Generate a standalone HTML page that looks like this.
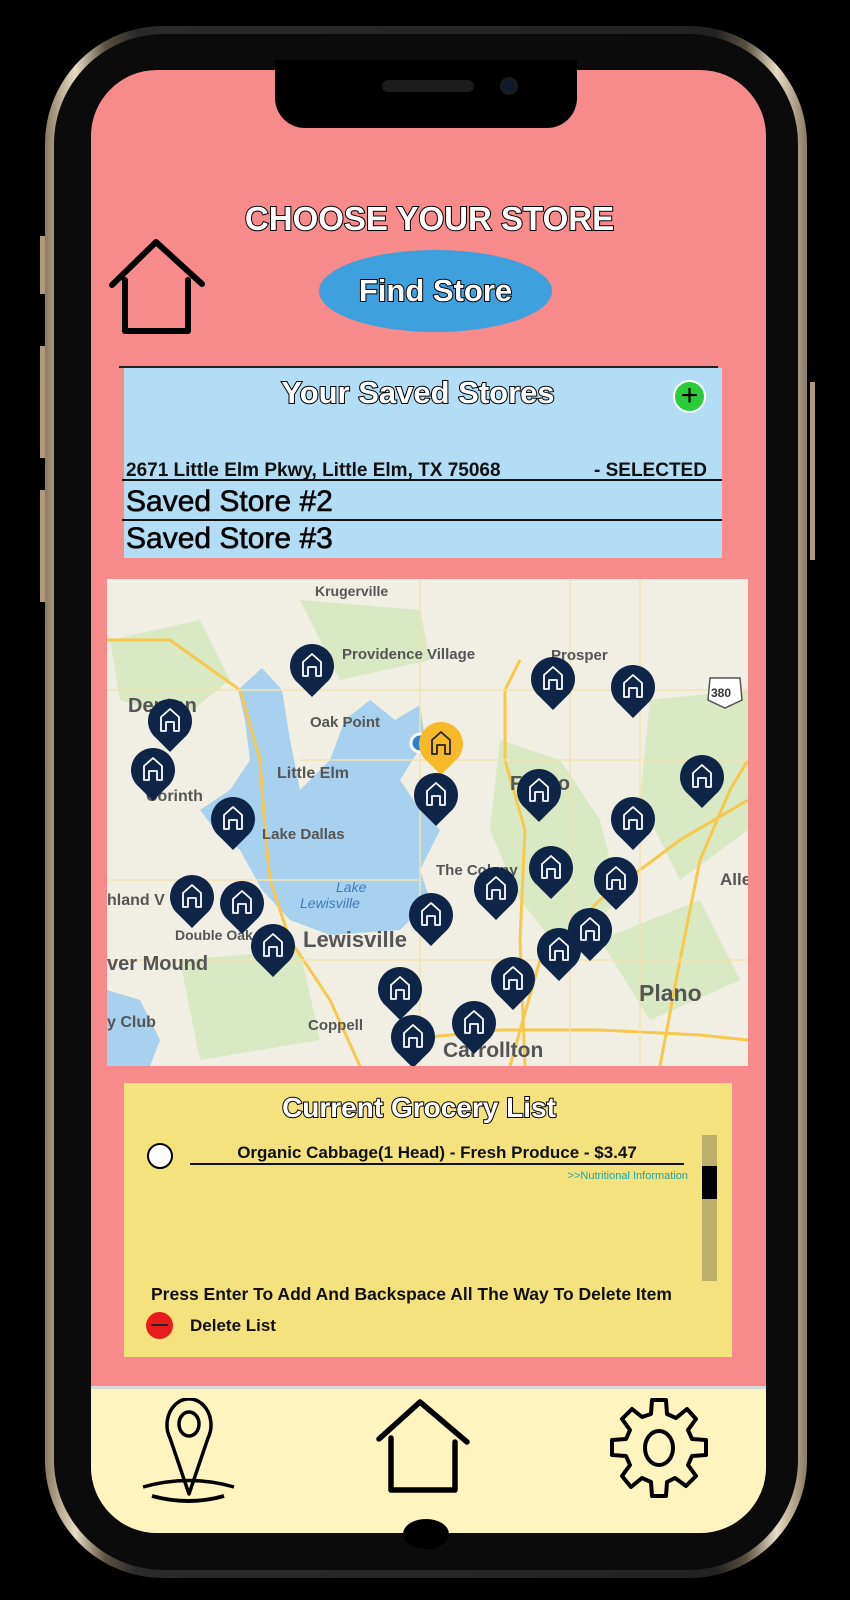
<!DOCTYPE html>
<html><head><meta charset="utf-8"><style>
*{margin:0;padding:0;box-sizing:border-box}
body{width:850px;height:1600px;background:#000;position:relative;overflow:hidden;font-family:"Liberation Sans",sans-serif}
.abs{position:absolute}
.bezel{left:45px;top:26px;width:762px;height:1552px;border-radius:118px;background:linear-gradient(90deg,#8a7a62,#e8dcc6 4%,#5a5040 8%,#2a2a2a 12%,#222 88%,#5a5040 92%,#e8dcc6 96%,#8a7a62)}
.inner{left:54px;top:34px;width:744px;height:1536px;border-radius:110px;background:#0b0b0b}
.screen{left:91px;top:70px;width:675px;height:1463px;border-radius:66px;background:#f78b8b;overflow:hidden}
.notch{left:275px;top:60px;width:302px;height:68px;background:#000;border-radius:0 0 30px 30px}
.out{color:#fff;font-weight:bold;-webkit-text-stroke:2px #000;paint-order:stroke fill;text-align:center;white-space:nowrap}
.q{font-family:"Liberation Sans",sans-serif}
</style></head><body>
<div class="abs bezel"></div>
<div class="abs inner"></div>
<div class="abs screen"></div>
<div class="abs notch"></div>
<div class="abs" style="left:382px;top:80px;width:92px;height:12px;border-radius:6px;background:#1c1c1c"></div>
<div class="abs" style="left:500px;top:77px;width:18px;height:18px;border-radius:50%;background:#0d1a2e;border:3px solid #1c1c1c"></div>
<div class="abs" style="left:40px;top:236px;width:5px;height:58px;background:#b09a78"></div>
<div class="abs" style="left:40px;top:346px;width:5px;height:112px;background:#b09a78"></div>
<div class="abs" style="left:40px;top:490px;width:5px;height:112px;background:#b09a78"></div>
<div class="abs" style="left:810px;top:382px;width:5px;height:178px;background:#b09a78"></div>

<div class="abs out q" style="left:92px;width:675px;top:200px;font-size:33px">CHOOSE YOUR STORE</div>
<svg class="abs" style="left:108px;top:236px" width="102" height="102" viewBox="0 0 102 102"><path d="M4 49 L48 6 L94 48 M17 44 L17 95 L80 95 L80 44" fill="none" stroke="#000" stroke-width="6" stroke-linecap="round" stroke-linejoin="round"/></svg>
<div class="abs" style="left:319px;top:250px;width:233px;height:82px;border-radius:50%;background:#3ea0dc"></div>
<div class="abs out q" style="left:319px;width:233px;top:273px;font-size:31px">Find Store</div>

<div class="abs" style="left:119px;top:366px;width:599px;height:2px;background:#222"></div>
<div class="abs" style="left:124px;top:368px;width:598px;height:190px;background:#b3dcf5"></div>
<div class="abs out q" style="left:124px;width:598px;top:375px;font-size:31px;padding-right:10px">Your Saved Stores</div>
<div class="abs" style="left:673px;top:380px;width:33px;height:33px;border-radius:50%;background:#2ccb3a;border:2px solid #fff;color:#000;font-size:30px;line-height:27px;text-align:center">+</div>
<div class="abs q" style="left:126px;top:460px;font-size:19px;font-weight:bold;color:#111;white-space:nowrap">2671 Little Elm Pkwy, Little Elm, TX 75068</div>
<div class="abs q" style="left:594px;top:460px;font-size:19px;font-weight:bold;color:#111;white-space:nowrap">- SELECTED</div>
<div class="abs" style="left:122px;top:479px;width:600px;height:2px;background:#111"></div>
<div class="abs q" style="left:126px;top:485px;font-size:30px;color:#000;-webkit-text-stroke:0.6px #000">Saved Store #2</div>
<div class="abs" style="left:122px;top:519px;width:600px;height:2px;background:#111"></div>
<div class="abs q" style="left:126px;top:522px;font-size:30px;color:#000;-webkit-text-stroke:0.6px #000">Saved Store #3</div>

<svg class="abs" style="left:107px;top:579px" width="641" height="487" viewBox="107 579 641 487">
<defs>
<g id="pin"><path d="M0 32 L-14 18 A22 22 0 1 1 14 18 Z" fill="#0f2547"/><path d="M-9 11 L-9 -3 L0 -11 L9 -3 L9 11 L4 11 L4 2 L-4 2 L-4 11 Z" fill="none" stroke="#fff" stroke-width="1.8" stroke-linejoin="round"/></g>
<g id="piny"><path d="M0 32 L-14 18 A22 22 0 1 1 14 18 Z" fill="#f6b928"/><path d="M-9 11 L-9 -3 L0 -11 L9 -3 L9 11 L4 11 L4 2 L-4 2 L-4 11 Z" fill="none" stroke="#222" stroke-width="1.8" stroke-linejoin="round"/></g>
</defs>
<rect x="107" y="579" width="641" height="487" fill="#f1eee4"/>
<g fill="#d8e9c4">
<path d="M500 740 L560 760 L600 820 L620 900 L560 950 L520 900 L490 830 Z"/>
<path d="M650 700 L748 690 L748 830 L680 880 L640 800 Z"/>
<path d="M110 640 L200 620 L230 680 L180 720 L120 700 Z"/>
<path d="M300 600 L420 610 L430 660 L340 680 Z"/>
<path d="M600 940 L700 900 L740 980 L650 1020 Z"/>
<path d="M180 960 L300 950 L320 1040 L200 1060 Z"/>
</g>
<g fill="#a7d1ee">
<path d="M238 690 L262 668 L282 690 L290 740 L300 790 L330 760 L345 720 L370 700 L395 720 L420 705 L425 740 L400 780 L420 810 L440 830 L420 870 L430 900 L400 930 L330 935 L290 920 L262 890 L240 850 L215 830 L200 810 L230 790 L250 760 L245 720 Z"/>
<path d="M107 990 L140 1000 L160 1040 L150 1066 L107 1066 Z"/>
</g>
<g fill="none" stroke="#f6c94c" stroke-width="3">
<path d="M107 640 L170 640 L240 690 L260 760 L265 830 L270 880 L290 940 L330 1000 L360 1066"/>
<path d="M510 1066 L540 960 L600 900 L680 840 L748 800"/>
<path d="M525 1066 L520 940 L525 830 L505 760 L505 690 L520 660"/>
<path d="M660 1066 L680 960 L700 860 L730 790 L748 760"/>
<path d="M400 1040 L500 1030 L600 1030 L700 1035 L748 1040"/>
</g>
<g fill="none" stroke="#f4e2b0" stroke-width="1.5">
<path d="M107 690 L748 690"/><path d="M300 760 L748 760"/><path d="M420 579 L420 1066"/><path d="M570 579 L570 1066"/><path d="M640 579 L640 1066"/><path d="M107 880 L420 880"/><path d="M107 960 L748 960"/>
</g>
<g font-family="Liberation Sans,sans-serif" fill="#555" font-weight="bold">
<text x="315" y="596" font-size="14">Krugerville</text>
<text x="342" y="659" font-size="15">Providence Village</text>
<text x="551" y="660" font-size="15">Prosper</text>
<text x="128" y="712" font-size="20">Denton</text>
<text x="310" y="727" font-size="15">Oak Point</text>
<text x="277" y="778" font-size="16">Little Elm</text>
<text x="262" y="839" font-size="15">Lake Dallas</text>
<text x="436" y="875" font-size="15">The Colony</text>
<text x="146" y="801" font-size="16">Corinth</text>
<text x="107" y="905" font-size="16">hland V</text>
<text x="175" y="940" font-size="14">Double Oak</text>
<text x="303" y="947" font-size="22">Lewisville</text>
<text x="107" y="970" font-size="20">ver Mound</text>
<text x="107" y="1027" font-size="16">y Club</text>
<text x="308" y="1030" font-size="15">Coppell</text>
<text x="443" y="1057" font-size="21">Carrollton</text>
<text x="639" y="1001" font-size="23">Plano</text>
<text x="510" y="790" font-size="20">Frisco</text>
<text x="720" y="885" font-size="17">Allen</text>
<text x="336" y="892" font-size="14" fill="#3d7bbd" font-style="italic" font-weight="normal">Lake</text>
<text x="300" y="908" font-size="14" fill="#3d7bbd" font-style="italic" font-weight="normal">Lewisville</text>
</g>
<path d="M710 678 L740 678 L742 700 L725 708 L708 700 Z" fill="#fff" stroke="#555" stroke-width="1.5"/>
<text x="711" y="697" font-size="12" font-weight="bold" fill="#333" font-family="Liberation Sans,sans-serif">380</text>
<circle cx="420" cy="743" r="9" fill="#2a7fd4" stroke="#fff" stroke-width="3"/>
<g>
<use href="#pin" x="312" y="665"/><use href="#pin" x="553" y="678"/><use href="#pin" x="633" y="686"/>
<use href="#pin" x="170" y="720"/><use href="#pin" x="153" y="769"/>
<use href="#piny" x="441" y="743"/>
<use href="#pin" x="436" y="794"/><use href="#pin" x="539" y="790"/><use href="#pin" x="702" y="776"/>
<use href="#pin" x="233" y="818"/><use href="#pin" x="633" y="818"/><use href="#pin" x="551" y="867"/>
<use href="#pin" x="616" y="878"/><use href="#pin" x="192" y="896"/><use href="#pin" x="242" y="902"/>
<use href="#pin" x="496" y="888"/><use href="#pin" x="590" y="929"/><use href="#pin" x="431" y="914"/>
<use href="#pin" x="273" y="945"/><use href="#pin" x="559" y="949"/><use href="#pin" x="513" y="978"/>
<use href="#pin" x="400" y="988"/><use href="#pin" x="474" y="1022"/><use href="#pin" x="413" y="1036"/>
</g>
</svg>

<div class="abs" style="left:124px;top:1083px;width:608px;height:274px;background:#f4e27f"></div>
<div class="abs out q" style="left:124px;width:590px;top:1092px;font-size:28px">Current Grocery List</div>
<div class="abs" style="left:147px;top:1143px;width:26px;height:26px;border-radius:50%;background:#fff;border:2px solid #000"></div>
<div class="abs q" style="left:190px;width:494px;top:1143px;text-align:center;font-size:17px;font-weight:bold;color:#111;white-space:nowrap">Organic Cabbage(1 Head) - Fresh Produce - $3.47</div>
<div class="abs" style="left:190px;top:1163px;width:494px;height:2px;background:#111"></div>
<div class="abs q" style="left:480px;width:208px;top:1170px;text-align:right;font-size:11px;color:#1aa6a6">&gt;&gt;Nutritional Information</div>
<div class="abs" style="left:702px;top:1135px;width:15px;height:146px;background:#bdb06a"></div>
<div class="abs" style="left:702px;top:1166px;width:15px;height:33px;background:#000"></div>
<div class="abs q" style="left:151px;top:1284px;font-size:17.5px;font-weight:bold;color:#111;white-space:nowrap">Press Enter To Add And Backspace All The Way To Delete Item</div>
<div class="abs" style="left:146px;top:1312px;width:27px;height:27px;border-radius:50%;background:#e81c1c"><div class="abs" style="left:5px;top:12px;width:17px;height:2px;background:#222"></div></div>
<div class="abs q" style="left:190px;top:1316px;font-size:17px;font-weight:bold;color:#111">Delete List</div>

<div class="abs" style="left:91px;top:1386px;width:675px;height:147px;background:#fdf4c0;border-top:3px solid #d8d8d8;border-radius:0 0 66px 66px"></div>
<svg class="abs" style="left:140px;top:1398px" width="100" height="115" viewBox="0 0 100 115"><path d="M49 96 L30 40 A22 26 0 1 1 68 40 Z" fill="none" stroke="#000" stroke-width="3.5" stroke-linejoin="round"/><ellipse cx="49" cy="26" rx="10" ry="12" fill="none" stroke="#000" stroke-width="3.5"/><path d="M3 89 Q49 76 94 89" fill="none" stroke="#000" stroke-width="3.5"/><path d="M12 98 Q49 108 84 98" fill="none" stroke="#000" stroke-width="4"/></svg>
<svg class="abs" style="left:375px;top:1398px" width="100" height="105" viewBox="0 0 100 105"><path d="M4 41 L45 4 L92 44 M16 40 L16 92 L80 92 L80 44" fill="none" stroke="#000" stroke-width="5.5" stroke-linecap="round" stroke-linejoin="round"/></svg>
<svg class="abs" style="left:604px;top:1397px" width="114" height="110" viewBox="0 0 114 110"><path d="M48 3 L62 3 L63 17 L72 21 L83 12 L92 22 L84 33 L88 42 L102 43 L102 58 L88 59 L84 68 L92 79 L82 89 L71 81 L63 85 L62 99 L48 99 L47 85 L38 81 L27 90 L18 79 L26 68 L22 59 L8 58 L8 43 L22 42 L26 33 L18 22 L28 12 L38 20 L47 17 Z" fill="none" stroke="#000" stroke-width="4" stroke-linejoin="round"/><ellipse cx="55" cy="51" rx="14" ry="17" fill="none" stroke="#000" stroke-width="4"/></svg>
<div class="abs" style="left:403px;top:1519px;width:46px;height:30px;border-radius:50%;background:#000"></div>
</body></html>
